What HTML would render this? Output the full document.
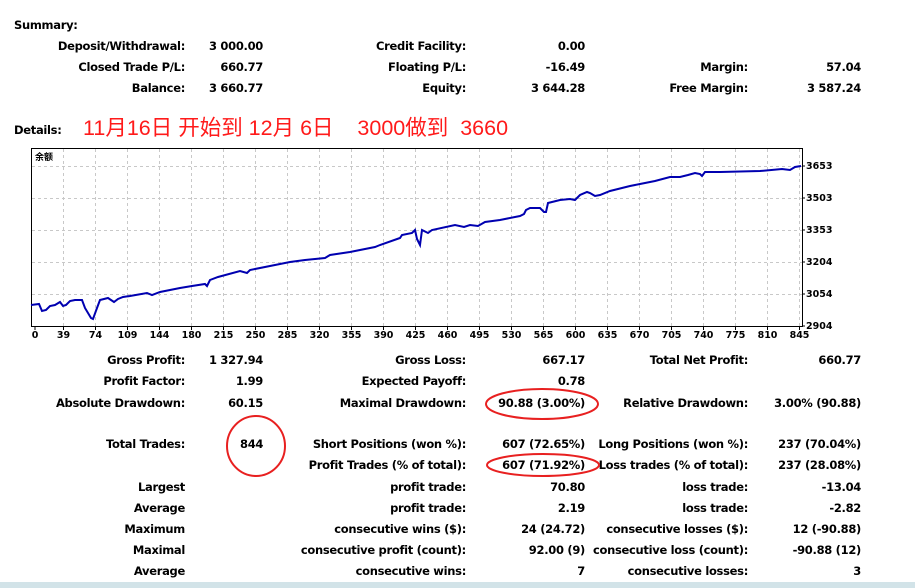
<!DOCTYPE html>
<html><head><meta charset="utf-8"><style>
body{margin:0;width:915px;height:588px;background:#fff;position:relative;overflow:hidden;font-family:"DejaVu Sans","Liberation Sans",sans-serif;font-size:11.5px;font-weight:bold;color:#000}
span{position:absolute;white-space:nowrap;line-height:14px;letter-spacing:-0.3px}
</style></head><body>
<span style="left:14px;top:18px">Summary:</span>
<span style="left:14px;top:123px">Details:</span>
<span style="left:83px;top:114px;font-family:'Liberation Sans','Noto Sans CJK SC',sans-serif;font-weight:normal;color:#ff1a1a;font-size:21.5px;line-height:28px;letter-spacing:0">11月16日 开始到 12月 6日 &nbsp;&nbsp; 3000做到&nbsp; 3660</span>

<div id="t"></div>
<svg style="position:absolute;left:0;top:0" width="915" height="588">
<g stroke="#c8c8c8" stroke-dasharray="3,3" stroke-width="1" fill="none" id="grid"></g>
<rect x="31.5" y="148.5" width="771" height="178" fill="none" stroke="#000"/>
<text x="35" y="160" font-size="9" font-family="Noto Sans CJK SC,sans-serif" fill="#000">余额</text>
<polyline fill="none" stroke="#0000b0" stroke-width="2" points="31,305 39,304 42,311 46,310 50,306 55,305 60,302 63,306 66,305 70,301 75,300 82,300 85,308 91,318 93,319 97,308 100,300 108,298 114,302 118,299 123,297 130,296 147,293 152,295 160,292 180,288 192,286 205,284 207,286 210,280 218,277 240,271 247,273 250,270 270,266 290,262 305,260 325,258 330,255 350,252 375,247 380,245 400,238 402,235 412,233 415,230 417,239 420,245 422,230 428,233 432,230 455,225 464,227 470,225 478,226 485,222 500,220 520,216 524,214 526,210 530,208 540,208 544,212 546,212 548,203 560,200 570,199 575,200 580,195 587,192 590,193 595,196 600,195 610,191 630,186 640,184 655,181 670,177 680,177 688,175 695,173 700,174 702,176 705,172 720,172 760,171 782,169 790,170 795,167 801,166"/>
<g fill="none" stroke="#e82020" stroke-width="2">
<ellipse cx="256" cy="446" rx="29" ry="30"/>
<ellipse cx="543" cy="465" rx="56" ry="11"/>
<ellipse cx="542" cy="404" rx="56" ry="15"/>
</g>
<rect x="0" y="582" width="915" height="6" fill="#d2e3e8"/>
</svg>
<script>
var g=document.getElementById('grid'),s='';
for(var k=0;k<24;k++){var x=63.5+32*k;s+='<line x1="'+x+'" y1="149" x2="'+x+'" y2="326"/>';}
[166,198,230,262,294].forEach(function(y){s+='<line x1="32" y1="'+(y+.5)+'" x2="802" y2="'+(y+.5)+'"/>';});
g.innerHTML=s;
var ax='';var xl=[0,39,74,109,144,180,215,250,285,320,355,390,425,460,495,530,565,600,635,670,705,740,775,810,845];
xl.forEach(function(v,i){var cx=(i==0?35:63.5+32*(i-1));ax+='<text x="'+cx+'" y="338" font-size="9.5" text-anchor="middle">'+v+'</text>';ax+='<line x1="'+cx+'" y1="326" x2="'+cx+'" y2="330" stroke="#000"/>';});
[[3653,166],[3503,198],[3353,230],[3204,262],[3054,294],[2904,326]].forEach(function(p){ax+='<text x="806" y="'+(p[1]+3)+'" font-size="9.5">'+p[0]+'</text><line x1="802" y1="'+p[1]+'" x2="805" y2="'+p[1]+'" stroke="#000"/>';});
document.querySelector('svg').insertAdjacentHTML('beforeend','<g font-family="DejaVu Sans,sans-serif" fill="#000">'+ax+'</g>');
var rows=[
[46,'Deposit/Withdrawal:','3 000.00','Credit Facility:','0.00','',''],
[67,'Closed Trade P/L:','660.77','Floating P/L:','-16.49','Margin:','57.04'],
[88,'Balance:','3 660.77','Equity:','3 644.28','Free Margin:','3 587.24'],
[360,'Gross Profit:','1 327.94','Gross Loss:','667.17','Total Net Profit:','660.77'],
[381,'Profit Factor:','1.99','Expected Payoff:','0.78','',''],
[403,'Absolute Drawdown:','60.15','Maximal Drawdown:','90.88 (3.00%)','Relative Drawdown:','3.00% (90.88)'],
[444,'Total Trades:','','Short Positions (won %):','607 (72.65%)','Long Positions (won %):','237 (70.04%)'],
[465,'','','Profit Trades (% of total):','607 (71.92%)','Loss trades (% of total):','237 (28.08%)'],
[487,'Largest','','profit trade:','70.80','loss trade:','-13.04'],
[508,'Average','','profit trade:','2.19','loss trade:','-2.82'],
[529,'Maximum','','consecutive wins ($):','24 (24.72)','consecutive losses ($):','12 (-90.88)'],
[550,'Maximal','','consecutive profit (count):','92.00 (9)','consecutive loss (count):','-90.88 (12)'],
[571,'Average','','consecutive wins:','7','consecutive losses:','3']];
var ends=[185,263,466,585,748,861],h='';
rows.forEach(function(r){for(var i=0;i<6;i++){if(r[i+1])h+='<span style="right:'+(915-ends[i])+'px;top:'+(r[0]-7)+'px">'+r[i+1]+'</span>';}});
h+='<span style="left:240px;top:437px">844</span>';
document.getElementById('t').innerHTML=h;
</script>
</body></html>
